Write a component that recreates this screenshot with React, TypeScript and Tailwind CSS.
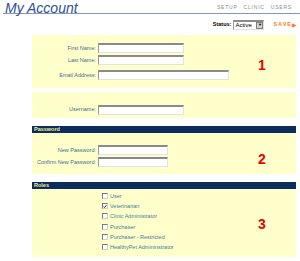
import React from "react";

const Field = ({ label, w, gap = "mt-[2px]" }: { label: string; w: string; gap?: string }) => (
  <div className={`flex items-center ${gap}`}>
    <div className="w-[66px] pr-[2px] text-right text-[5.5px] text-[#3d6f8e]">{label}</div>
    <div className={`${w} h-[10px] bg-white border border-t-2 border-t-[#8a8a8a] border-l-[#9a9a9a] border-r-[#e2e2e2] border-b-[#e2e2e2]`} />
  </div>
);

const Num = ({ n }: { n: string }) => (
  <div className="ml-auto mr-[24px] w-[20px] flex items-center justify-center text-[14px] font-bold text-[#ee0000]">
    {n}
  </div>
);

const Bar = ({ title }: { title: string }) => (
  <div className="ml-[32px] w-[264px] h-[7px] bg-[#0b2c5c] flex items-center pl-[2px] text-[5.5px] font-bold text-[#f2f28a] leading-none">
    {title}
  </div>
);

const roles = [
  { name: "User", on: false },
  { name: "Veterinarian", on: true },
  { name: "Clinic Administrator", on: false },
  { name: "Purchaser", on: false },
  { name: "Purchaser - Restricted", on: false },
  { name: "HealthyPet Admininstrator", on: false },
];

export default function App() {
  return (
    <div className="w-[300px] h-[261px] bg-white overflow-hidden" style={{ fontFamily: '"Liberation Sans", Arial, sans-serif' }}>
      <div className="flex items-start justify-between pl-[2px] pr-[8px] h-[14px] border-b border-[#8198c4] ml-[3px]">
        <div className="text-[14px] italic text-[#2d4f94] leading-[14px] pt-[1px] whitespace-nowrap">My Account</div>
        <div className="flex gap-[6px] text-[5px] tracking-[0.8px] text-[#8a8a8a] pt-[5px] leading-none">
          <span>SETUP</span>
          <span>CLINIC</span>
          <span>USERS</span>
        </div>
      </div>

      <div className="flex items-center justify-end h-[21px] pr-[3px]">
        <span className="text-[5.5px] font-bold text-black mr-[2px]">Status:</span>
        <div className="w-[31px] h-[10px] bg-white border border-t-2 border-t-[#8a8a8a] border-l-[#9a9a9a] border-r-[#e2e2e2] border-b-[#e2e2e2] flex items-center justify-between">
          <span className="text-[6px] pl-[1px] leading-none">Active</span>
          <span className="w-[7px] h-[7px] bg-[#d4d0c8] border border-[#808080] flex items-center justify-center text-[4px] leading-none">▼</span>
        </div>
        <span className="ml-[9px] text-[5.5px] font-bold tracking-[1px] text-[#ff7a1a]">SAVE</span>
        <span className="text-[6px] text-[#ff7a1a] leading-none">▶</span>
      </div>

      <div className="ml-[32px] w-[264px] h-[53px] bg-[#ffffcc] flex pt-[8px]">
        <div>
          <Field label="First Name:" w="w-[86px]" gap="" />
          <Field label="Last Name:" w="w-[86px]" />
          <Field label="Email Address:" w="w-[131px]" gap="mt-[5px]" />
        </div>
        <Num n="1" />
      </div>

      <div className="mt-[4px] ml-[32px] w-[264px] h-[26px] bg-[#ffffcc] flex pt-[9px]">
        <Field label="Username:" w="w-[86px]" gap="" />
      </div>

      <div className="mt-[8px]">
        <Bar title="Password" />
      </div>
      <div className="ml-[32px] w-[264px] h-[41px] bg-[#ffffcc] flex pt-[12px]">
        <div>
          <Field label="New Password:" w="w-[70px]" gap="" />
          <Field label="Confirm New Password:" w="w-[70px]" />
        </div>
        <Num n="2" />
      </div>

      <div className="mt-[8px]">
        <Bar title="Roles" />
      </div>
      <div className="ml-[32px] w-[264px] h-[68px] bg-[#ffffcc] flex pt-[2px]">
        <div className="pl-[70px]">
          {roles.map((r) => (
            <div key={r.name} className="flex items-center h-[10.2px]">
              <span className="w-[6px] h-[6px] bg-white border border-[#7a7a7a] border-b-[#d0d0d0] border-r-[#d0d0d0] flex items-center justify-center">
                {r.on && (
                  <svg viewBox="0 0 6 6" className="w-[5px] h-[5px]">
                    <path d="M0.8 3 L2.3 4.6 L5.2 1" stroke="#000" strokeWidth="1.2" fill="none" />
                  </svg>
                )}
              </span>
              <span className="ml-[2px] text-[5.5px] text-[#3d7e9a]">{r.name}</span>
            </div>
          ))}
        </div>
        <Num n="3" />
      </div>
    </div>
  );
}
